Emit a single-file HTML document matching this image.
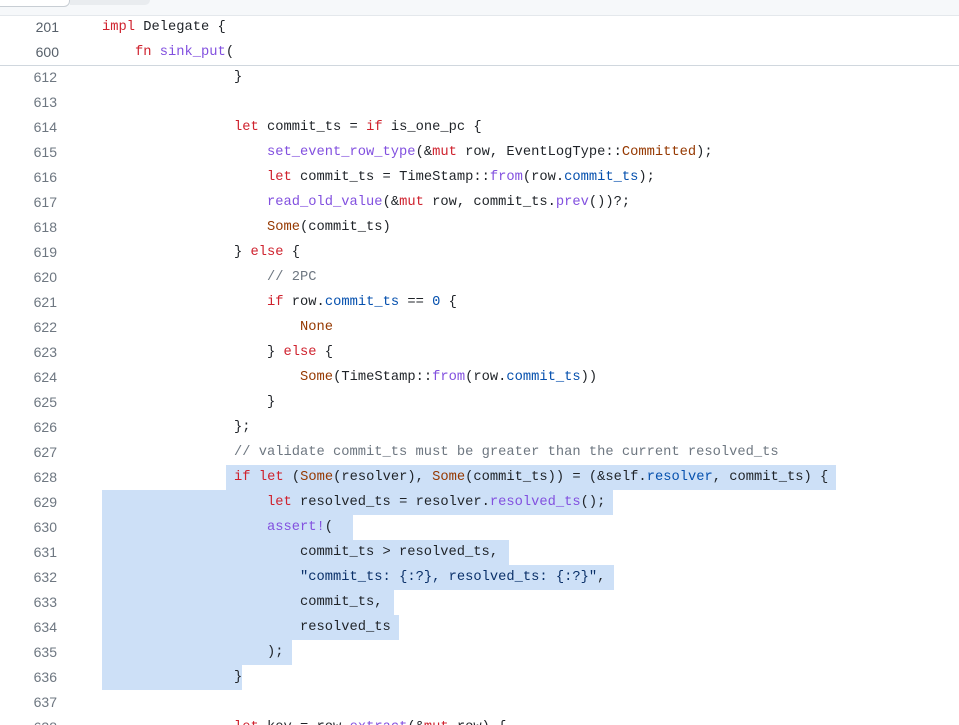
<!DOCTYPE html>
<html><head><meta charset="utf-8"><style>
html,body{margin:0;width:959px;height:725px;overflow:hidden}
body{background:#fff;font-family:"Liberation Mono",monospace;font-size:13.75px;color:#1f2328;position:relative}
.topbar{position:absolute;left:0;top:0;width:959px;height:15px;background:#f6f8fa;border-bottom:1px solid #e4e8ec;overflow:hidden}
.tab1{position:absolute;left:-10px;top:-10px;width:78px;height:15px;border:1px solid #c8ced4;border-radius:6px;background:#fff}
.tab2{position:absolute;left:70px;top:0;width:80px;height:5px;background:#e9ecef;border-radius:0 0 6px 0}
.row{position:absolute;left:0;height:25px;line-height:25px;white-space:pre;width:959px}
.ln{position:absolute;left:0;width:57px;text-align:right;color:#6e7781;font-family:"Liberation Sans",sans-serif;font-size:14px}
.hd .ln{width:59px;color:#57606a}
.code{position:absolute;left:102px}
.sel{position:absolute;background:#cde0f7;height:25px}
.k{color:#cf222e}.f{color:#8250df}.c{color:#6e7781}.s{color:#0a3069}.b{color:#0550ae}.o{color:#953800}
.hdr{position:absolute;left:0;top:16px;width:959px;height:49px;border-bottom:1px solid #d0d7de;background:#fff}
</style></head><body>
<div class="topbar"><div class="tab1"></div><div class="tab2"></div></div>
<div class="sel" style="left:226px;top:465px;width:610px"></div>
<div class="sel" style="left:102px;top:490px;width:511px"></div>
<div class="sel" style="left:102px;top:515px;width:251px"></div>
<div class="sel" style="left:102px;top:540px;width:407px"></div>
<div class="sel" style="left:102px;top:565px;width:512px"></div>
<div class="sel" style="left:102px;top:590px;width:292px"></div>
<div class="sel" style="left:102px;top:615px;width:297px"></div>
<div class="sel" style="left:102px;top:640px;width:190px"></div>
<div class="sel" style="left:102px;top:665px;width:140px"></div>
<div class="hdr">
<div class="row hd" style="top:-1px"><span class="ln">201</span><span class="code"><span class="k">impl</span> Delegate {</span></div>
<div class="row hd" style="top:24px"><span class="ln">600</span><span class="code">    <span class="k">fn</span> <span class="f">sink_put</span>(</span></div>
</div>
<div class="row" style="top:65px"><span class="ln">612</span><span class="code">                }</span></div>
<div class="row" style="top:90px"><span class="ln">613</span></div>
<div class="row" style="top:115px"><span class="ln">614</span><span class="code">                <span class="k">let</span> commit_ts = <span class="k">if</span> is_one_pc {</span></div>
<div class="row" style="top:140px"><span class="ln">615</span><span class="code">                    <span class="f">set_event_row_type</span>(&amp;<span class="k">mut</span> row, EventLogType::<span class="o">Committed</span>);</span></div>
<div class="row" style="top:165px"><span class="ln">616</span><span class="code">                    <span class="k">let</span> commit_ts = TimeStamp::<span class="f">from</span>(row.<span class="b">commit_ts</span>);</span></div>
<div class="row" style="top:190px"><span class="ln">617</span><span class="code">                    <span class="f">read_old_value</span>(&amp;<span class="k">mut</span> row, commit_ts.<span class="f">prev</span>())?;</span></div>
<div class="row" style="top:215px"><span class="ln">618</span><span class="code">                    <span class="o">Some</span>(commit_ts)</span></div>
<div class="row" style="top:240px"><span class="ln">619</span><span class="code">                } <span class="k">else</span> {</span></div>
<div class="row" style="top:265px"><span class="ln">620</span><span class="code">                    <span class="c">// 2PC</span></span></div>
<div class="row" style="top:290px"><span class="ln">621</span><span class="code">                    <span class="k">if</span> row.<span class="b">commit_ts</span> == <span class="b">0</span> {</span></div>
<div class="row" style="top:315px"><span class="ln">622</span><span class="code">                        <span class="o">None</span></span></div>
<div class="row" style="top:340px"><span class="ln">623</span><span class="code">                    } <span class="k">else</span> {</span></div>
<div class="row" style="top:365px"><span class="ln">624</span><span class="code">                        <span class="o">Some</span>(TimeStamp::<span class="f">from</span>(row.<span class="b">commit_ts</span>))</span></div>
<div class="row" style="top:390px"><span class="ln">625</span><span class="code">                    }</span></div>
<div class="row" style="top:415px"><span class="ln">626</span><span class="code">                };</span></div>
<div class="row" style="top:440px"><span class="ln">627</span><span class="code">                <span class="c">// validate commit_ts must be greater than the current resolved_ts</span></span></div>
<div class="row" style="top:465px"><span class="ln">628</span><span class="code">                <span class="k">if</span> <span class="k">let</span> (<span class="o">Some</span>(resolver), <span class="o">Some</span>(commit_ts)) = (&amp;self.<span class="b">resolver</span>, commit_ts) {</span></div>
<div class="row" style="top:490px"><span class="ln">629</span><span class="code">                    <span class="k">let</span> resolved_ts = resolver.<span class="f">resolved_ts</span>();</span></div>
<div class="row" style="top:515px"><span class="ln">630</span><span class="code">                    <span class="f">assert!</span>(</span></div>
<div class="row" style="top:540px"><span class="ln">631</span><span class="code">                        commit_ts &gt; resolved_ts,</span></div>
<div class="row" style="top:565px"><span class="ln">632</span><span class="code">                        <span class="s">"commit_ts: {:?}, resolved_ts: {:?}"</span>,</span></div>
<div class="row" style="top:590px"><span class="ln">633</span><span class="code">                        commit_ts,</span></div>
<div class="row" style="top:615px"><span class="ln">634</span><span class="code">                        resolved_ts</span></div>
<div class="row" style="top:640px"><span class="ln">635</span><span class="code">                    );</span></div>
<div class="row" style="top:665px"><span class="ln">636</span><span class="code">                }</span></div>
<div class="row" style="top:690px"><span class="ln">637</span></div>
<div class="row" style="top:715px"><span class="ln">638</span><span class="code">                <span class="k">let</span> key = row.<span class="f">extract</span>(&amp;<span class="k">mut</span> row) {</span></div>
</body></html>
